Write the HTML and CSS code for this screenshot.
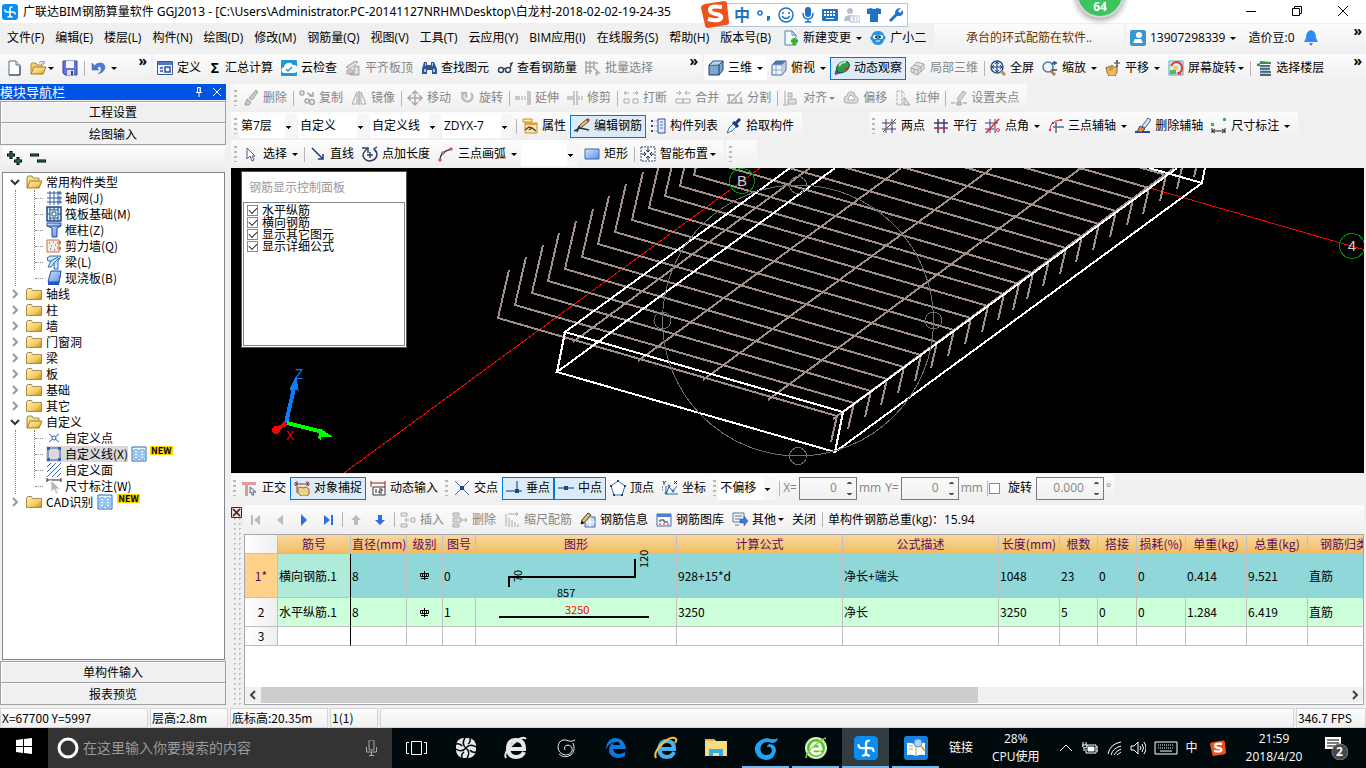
FILE: index.html
```html
<!DOCTYPE html>
<html lang="zh-CN">

<head>
    <meta charset="UTF-8">
    <meta name="viewport" content="width=device-width, initial-scale=1.0">
    <title>广联达BIM钢筋算量软件 GGJ2013</title>
    <link rel="stylesheet" href="styles.css">
</head>

<body>
    <!-- iconos -->
    <svg class="sprite" aria-hidden="true">
        <defs>
            <linearGradient id="gold" x1="0" y1="0" x2="1" y2="1"><stop offset="0" stop-color="#fdf0ba"/><stop offset=".6" stop-color="#f2cf68"/><stop offset="1" stop-color="#c98612"/></linearGradient>
            <linearGradient id="blue" x1="0" y1="0" x2="1" y2="1"><stop offset="0" stop-color="#d4e4ff"/><stop offset="1" stop-color="#5c8fe8"/></linearGradient>
        </defs>
        <symbol id="logo" viewBox="0 0 16 16"><rect width="16" height="16" rx="3" fill="#0a8df0"/><path d="M10 3q-2 0-2 2v6q0 2-2 2M3 6q0 2 2 2h6q2 0 2 2M10 13q-2 0-2-2" fill="none" stroke="#fff" stroke-width="1.500" stroke-linecap="round"/></symbol>
        <symbol id="page" viewBox="0 0 16 16"><path d="M3 1h7l4 4v10H3z" fill="#fff" stroke="#57718c"/><path d="M10 1v4h4" fill="#dbe9f8" stroke="#57718c"/><path d="M3 15h11V6" stroke="#2f4964" fill="none"/></symbol>
        <symbol id="open" viewBox="0 0 16 16"><path d="M1 14V4l1-1h4l1 2h5v3" fill="#f5d071" stroke="#b98a2a"/><path d="M1 14l3-7h12l-3 7z" fill="url(#gold)" stroke="#a87818"/><path d="M9 3q2-3 5-1M14 1v3h-3" fill="none" stroke="#7693b8"/></symbol>
        <symbol id="opened" viewBox="0 0 16 16"><path d="M1 14V3l1-1h4l1 2h6v3" fill="#f8dd92" stroke="#a88a4a"/><path d="M1 14l3-7h12l-3 7z" fill="url(#gold)" stroke="#a87818"/></symbol>
        <symbol id="save" viewBox="0 0 16 16"><path d="M1 1h14v14H3l-2-2z" fill="#6373d4" stroke="#3a46a3"/><path d="M4 1h8v7H4z" fill="#f3f5ff"/><path d="M5 10h7v5H5z" fill="#d9dcf0"/><path d="M9 11h2v4H9z" fill="#384190"/></symbol>
        <symbol id="undo" viewBox="0 0 16 16"><path d="M2 3v7h7L7 8q4-3 4 0 1 3-3 6 7-2 7-7-1-6-9-3L5 6z" fill="#4f79d2" stroke="#3a61b3" stroke-width=".5"/></symbol>
        <symbol id="form" viewBox="0 0 16 16"><path d="M.5 1.500h15v13H.5z" fill="#edf3ff" stroke="#39599a"/><path d="M1 2h14v3H1z" fill="#4a78d0"/><path d="M3 8h3M3 11h3M8 7h5v5H8z" fill="none" stroke="#35508c" stroke-width="1.500"/></symbol>
        <symbol id="cloud" viewBox="0 0 16 16"><rect width="16" height="16" rx="1" fill="#2196d8"/><path d="M4 13a3 3 0 0 1-1-6 5 5 0 0 1 9-2 4 4 0 0 1 1 8z" fill="#fff"/><path d="M5 9l2 2 4-4" fill="none" stroke="#2196d8" stroke-width="1.500"/></symbol>
        <symbol id="slab" viewBox="0 0 16 16"><path d="M1 7l9-6 3 1-8 7zM2 10h6v4H2zM9 6h5v9H5v-2h4z" fill="#ccc" stroke="#a9a9a9"/><path d="M4 8l7-5M10 9h3M10 12h3" stroke="#fff"/></symbol>
        <symbol id="binoc" viewBox="0 0 16 16"><path d="M3 2h3v3h4V2h3l3 7v5h-5v-4H6v4H1V9z" fill="#31568f"/><path d="M3 9h2v3H3zM12 9h2v3h-2zM4 3h1v3H4zM11 3h1v3h-1z" fill="#a9c8ee"/></symbol>
        <symbol id="glasses" viewBox="0 0 16 16"><g fill="#fff" stroke="#36465a" stroke-width="1.500"><circle cx="4" cy="10" r="2.500"/><circle cx="11" cy="10" r="2.500"/><path d="M6 9q1-1 2.500 0M13 8l2-5-2 1" fill="none"/></g></symbol>
        <symbol id="batch" viewBox="0 0 16 16"><path d="M1 1v13M5 1v13M9 1v5M0 3h13M0 7h10M0 11h7M8 7l6 6h-3l1 3" fill="none" stroke="#aaa" stroke-width="1.500"/></symbol>
        <symbol id="cube" viewBox="0 0 16 16"><path d="M1 5l4-4h10v9l-4 5H1z" fill="#7fa6d3" stroke="#1c3d66"/><path d="M1 5h10v10M11 5l4-4" fill="none" stroke="#1c3d66"/><path d="M2 5l3.500-3.500H14L11 4.500z" fill="#b9d3ee"/></symbol>
        <symbol id="cubetop" viewBox="0 0 16 16"><path d="M1 5l4-4h10v9l-4 5H1z" fill="#eef5fd" stroke="#3d638f"/><path d="M1 5l4-4h10l-4 4z" fill="#4a77b0"/><path d="M11 5v10M1 5h10M5 5v10M1 10h10M13 3v9" fill="none" stroke="#87a9cf"/></symbol>
        <symbol id="orbit" viewBox="0 0 16 16"><path d="M1 15q-1-5 4-9l3 7q-4 1-7 2z" fill="#5b4b96"/><ellipse cx="9" cy="7" rx="7" ry="5" transform="rotate(-35 9 7)" fill="#2f9b4d" stroke="#175b2b"/><path d="M5 6q2-4 7-4" stroke="#b5efbb" stroke-width="2" fill="none"/><path d="M10 9l5-1" stroke="#d32020"/></symbol>
        <symbol id="cubepart" viewBox="0 0 16 16"><path d="M1 8l6-6 7 2v5l-7 6-6-3zM1 8l7 2v5M8 10l6-6M4 5l7 2v5M4 9v4" fill="#e2e2e2" stroke="#a6a6a6"/></symbol>
        <symbol id="fit" viewBox="0 0 16 16"><circle cx="7" cy="7" r="6" fill="#e6effb" stroke="#2d507f" stroke-width="1.500"/><path d="M7 2v10M2 7h10M5 4l2-2 2 2M5 10l2 2 2-2M4 5L2 7l2 2M10 5l2 2-2 2" fill="none" stroke="#1d3f78"/><path d="M11 11l4 4" stroke="#b98d55" stroke-width="3"/></symbol>
        <symbol id="zoom" viewBox="0 0 16 16"><circle cx="6" cy="7" r="5" fill="#edf4fd" stroke="#5e7899" stroke-width="1.500"/><path d="M9 11l4 4" stroke="#bb8146" stroke-width="3"/><path d="M10 3h5M12.500 1v4M10 10h5" stroke="#26487c" stroke-width="1.500"/></symbol>
        <symbol id="pan" viewBox="0 0 16 16"><path d="M1 7l2 1 1-2 2 1 1-2 2 2 3 0v5l-2 4H4L2 12z" fill="#e9bb63" stroke="#9a6b23"/><path d="M5 8v3M7 7v3" stroke="#9a6b23"/><path d="M12 0v7M9 3h6M11 1h2M11 6h2" stroke="#25364d"/></symbol>
        <symbol id="rot" viewBox="0 0 16 16"><path d="M1 1h14v14H1z" fill="#d9f0f7" stroke="#4fa4bd"/><path d="M3 6q2-4 6-4 5 1 5 6 0 4-4 6" fill="none" stroke="#e23b2f" stroke-width="2"/><path d="M8 13l5-2v4z" fill="#e23b2f"/><path d="M5 6h5v4H5z" fill="#ecd064"/><path d="M2 10h6v4H2z" fill="#61b64c"/></symbol>
        <symbol id="floors" viewBox="0 0 16 16"><path d="M1 3h3V1l11 1v2H4z" fill="#3d8e46"/><path d="M4 6h10M4 9h10M4 12h11M4 15h11" stroke="#1f3446" stroke-width="1.500"/><path d="M4 7h9M4 10h9M4 13h9" stroke="#61a5c4"/><path d="M1 4h3v2H1z" fill="#3d8e46"/></symbol>
        <symbol id="brush" viewBox="0 0 16 16"><path d="M1 14h6l-3-3z" fill="#b5b5b5"/><path d="M6 8l7-8 2 2-6 8zM4 9l4 3-2 3H2z" fill="#c9c9c9" stroke="#a0a0a0"/></symbol>
        <symbol id="copy" viewBox="0 0 16 16"><g fill="#eee" stroke="#a9a9a9" stroke-width="1.500"><circle cx="3" cy="3" r="2"/><circle cx="8" cy="11" r="2"/><circle cx="13" cy="12" r="2.500"/><path d="M8 3l6 3M14 2v4h-4" fill="none"/></g></symbol>
        <symbol id="mirror" viewBox="0 0 16 16"><path d="M6 2v12H1zM10 2v12h5z" fill="#f4f4f4" stroke="#aaa"/><path d="M8 1v14" stroke="#888"/></symbol>
        <symbol id="move" viewBox="0 0 16 16"><path d="M8 2v12M2 8h12M5 4l3-3 3 3M5 12l3 3 3-3M4 5L1 8l3 3M12 5l3 3-3 3" fill="none" stroke="#aaa" stroke-width="1.500"/></symbol>
        <symbol id="spin" viewBox="0 0 16 16"><path d="M4 4a5 5 0 1 0 8-1M2 3h5v5" fill="none" stroke="#bbb" stroke-width="2.500"/></symbol>
        <symbol id="extend" viewBox="0 0 16 16"><path d="M0 7h5M0 9h5M13 1v14M15 1v14" stroke="#999"/><path d="M6 7h6M6 9h6" stroke="#aaa" stroke-dasharray="2 1"/></symbol>
        <symbol id="trim" viewBox="0 0 16 16"><path d="M0 7h6M0 9h6M7 1v14M10 1v14" stroke="#999"/><path d="M11 7h5M11 9h5" stroke="#aaa" stroke-dasharray="2 1"/></symbol>
        <symbol id="break" viewBox="0 0 16 16"><path d="M1 3h5M10 3h5M3 1L1 3l2 2M13 1l2 2-2 2M1 9h5v4H1zM10 9h5v4h-5z" fill="none" stroke="#aaa"/></symbol>
        <symbol id="merge" viewBox="0 0 16 16"><path d="M1 3h5M10 3h5M4 1l2 2-2 2M12 1l-2 2 2 2M1 9h7v4H1zM8 9h7v4H8z" fill="none" stroke="#aaa"/></symbol>
        <symbol id="split" viewBox="0 0 16 16"><path d="M0 5h8M0 13h16M2 5v8M9 13V9M14 7v6M4 12L14 2" stroke="#aaa" stroke-width="1.500"/></symbol>
        <symbol id="align" viewBox="0 0 16 16"><path d="M2 1v14M0 15h5M5 3h4v4H5zM5 9h8v5H5z" fill="#ddd" stroke="#aaa"/></symbol>
        <symbol id="offset" viewBox="0 0 16 16"><path d="M1 10q0-4 3-4 1-5 5-4 3 0 3 4 4 1 3 5-1 3-4 2H4q-3 0-3-3z" fill="#ddd" stroke="#aaa"/><path d="M5 9q1-3 3-4 3 1 4 5H5z" fill="#fff" stroke="#aaa"/></symbol>
        <symbol id="stretch" viewBox="0 0 16 16"><path d="M2 1h5v14H2zM7 1l3 4" fill="none" stroke="#aaa" stroke-dasharray="3 1"/><path d="M9 7v8h6z" fill="#ddd" stroke="#aaa"/></symbol>
        <symbol id="gripset" viewBox="0 0 16 16"><path d="M6 9l6-8 3 2-6 8z" fill="#d5d5d5" stroke="#aaa"/><path d="M0 13h4M6 12h4v3H6zM12 13h4" stroke="#999" fill="#ccc"/></symbol>
        <symbol id="props" viewBox="0 0 16 16"><path d="M1 1h9v3H1zM3 5h12v10H3z" fill="#ffe7ad" stroke="#d48c1d"/><path d="M3 5h12v2H3z" fill="#ef9a2f"/><path d="M3 12l4-3 3 1 4 3M7 12l3-2" fill="none" stroke="#3b4958" stroke-width="1.500"/></symbol>
        <symbol id="editbar" viewBox="0 0 16 16"><path d="M0 13l6-3 9 2M3 14l2-6" stroke="#27323d" fill="none" stroke-width="1.500"/><path d="M5 10l1-3 7-6 2 2-7 6z" fill="#edc57a" stroke="#624429"/><path d="M12 2l2-2 2 2-2 2z" fill="#d2362f"/></symbol>
        <symbol id="list" viewBox="0 0 16 16"><path d="M8 1h7v14H8z" fill="#e3edff" stroke="#2e4d8f"/><path d="M10 4h3M10 7h3M10 10h3" stroke="#5673b1"/><path d="M1 2h2v2H1zM1 7h2v2H1zM1 12h2v2H1z" fill="#344c7c"/><path d="M4 3h3M4 8h3M4 13h3" stroke="#7889a6" stroke-dasharray="1 1"/></symbol>
        <symbol id="picker" viewBox="0 0 16 16"><path d="M1 15l2-5 6-6 3 3-6 6z" fill="#e3f0fd" stroke="#3b75a8"/><path d="M7 4l5 5M10 5l4-4" stroke="#173d82" stroke-width="3"/></symbol>
        <symbol id="ax2" viewBox="0 0 16 16"><path d="M5 1v14M11 1v14M1 5h14M1 11h14" stroke="#35407c"/><path d="M2 14L15 1" stroke="#9a2b3a"/><path d="M4 10h2v2H4zM10 4h2v2h-2z" fill="#2ba03a"/></symbol>
        <symbol id="axpar" viewBox="0 0 16 16"><path d="M5 1v14M11 1v14M1 5h14" stroke="#35407c" stroke-width="1.500"/><path d="M1 10h14" stroke="#a32d38" stroke-width="1.500"/></symbol>
        <symbol id="axang" viewBox="0 0 16 16"><path d="M5 1v14M10 1v14M0 5h13M0 11h9" stroke="#35407c"/><path d="M1 15L14 1" stroke="#e0272f" stroke-width="1.500"/><circle cx="13" cy="12" r="1.500" fill="#fff" stroke="#e0272f"/></symbol>
        <symbol id="axarc" viewBox="0 0 16 16"><path d="M8 4v11M5 9h11" stroke="#5c668c" stroke-width="1.500"/><path d="M2 12q0-9 10-10" fill="none" stroke="#e0272f"/><path d="M1 11h2v2H1zM4 4h2v2H4zM12 1h2v2h-2z" fill="#e0272f"/></symbol>
        <symbol id="axdel" viewBox="0 0 16 16"><path d="M0 14h15" stroke="#28459b" stroke-width="2"/><path d="M7 8l6-8 3 2-6 8z" fill="#d7e1ef" stroke="#44648b"/><path d="M5 8l5 3-3 3H2z" fill="#e58c45" stroke="#3d445d"/></symbol>
        <symbol id="dims" viewBox="0 0 16 16"><path d="M1 10v5M14 10v5M1 13h13M4 11l-3 2 3 2M11 11l3 2-3 2" fill="none" stroke="#222"/><path d="M0 5h3v3H0zM12 0h3v3h-3z" fill="#39b54a"/></symbol>
        <symbol id="arrow" viewBox="0 0 16 16"><path d="M4 2v11l3-3 2 5 2-1-2-4h3z" fill="#fff" stroke="#4a5d79"/></symbol>
        <symbol id="seg" viewBox="0 0 16 16"><path d="M2 2l11 11M13 8v5H8" fill="none" stroke="#203d78" stroke-width="1.500"/></symbol>
        <symbol id="ptlen" viewBox="0 0 16 16"><path d="M5 3q-4 3-4 7 2 5 7 5 6-1 7-6 0-4-3-6M0 2h6v5M15 1l-3 2 2 3M5 9h6M8 6v6" fill="none" stroke="#2c4268" stroke-width="1.500"/></symbol>
        <symbol id="arc3" viewBox="0 0 16 16"><path d="M2 14q0-8 11-11" fill="none" stroke="#26477c" stroke-width="1.500"/><path d="M1 13h2v2H1zM4 6h2v2H4zM12 2h2v2h-2z" fill="#fff" stroke="#d02f26"/></symbol>
        <symbol id="rect" viewBox="0 0 16 16"><path d="M1 3h14v10H1z" fill="url(#blue)" stroke="#4166ae"/></symbol>
        <symbol id="smart" viewBox="0 0 16 16"><path d="M1 1h14v14H1z" fill="#fff" stroke="#26426d" stroke-dasharray="2 1"/><path d="M8 2v4M8 10v4M2 8h4M10 8h4M6 4l2 2 2-2M6 12l2-2 2 2M4 6l2 2-2 2M12 6l-2 2 2 2" fill="none" stroke="#1b2f50"/></symbol>
        <symbol id="ortho" viewBox="0 0 16 16"><path d="M0 2h14v3H6v11H3V5H0z" fill="#dd9ba0"/><path d="M8 7l6 5h-3l1 3h-2l-1-3-1 1z" fill="#dce5ec" stroke="#556c83"/></symbol>
        <symbol id="snap" viewBox="0 0 16 16"><path d="M3 1v12M13 1v5M0 4h16M1 2l2 2-2 2M15 2l-2 2 2 2" fill="none" stroke="#8b3630"/><path d="M4 8l3-1 2 1 3-1 3 2v5l-2 2H7l-3-3z" fill="#ead286" stroke="#98712c"/></symbol>
        <symbol id="dynin" viewBox="0 0 16 16"><path d="M1 1v6M15 1v6M1 3h14" stroke="#96201e"/><path d="M3 7h12v8H3z" fill="#fff" stroke="#333"/><path d="M6 9v4M9 9h3v2H9v2h3" fill="none" stroke="#222"/></symbol>
        <symbol id="cross" viewBox="0 0 16 16"><path d="M1 1l14 14M15 1L1 15" stroke="#4477b0"/><path d="M6 6h4v4H6z" fill="#154984"/></symbol>
        <symbol id="perp" viewBox="0 0 16 16"><path d="M0 11h16M11 1v10" stroke="#4477b0" stroke-width="1.500"/><path d="M9 9h4v4H9z" fill="#154984"/></symbol>
        <symbol id="mid" viewBox="0 0 16 16"><path d="M0 8h16" stroke="#4477b0" stroke-width="1.500"/><path d="M6 6h4v4H6z" fill="#154984"/></symbol>
        <symbol id="penta" viewBox="0 0 16 16"><path d="M8 1l7 5-3 9H4L1 6z" fill="#fff" stroke="#3d6da3"/><path d="M7 0h2v2H7zM0 5h2v2H0zM14 5h2v2h-2zM3 14h2v2H3zM11 14h2v2h-2z" fill="#164984"/></symbol>
        <symbol id="coord" viewBox="0 0 16 16"><path d="M4 6v8h12M4 14l3-7 4 4 4-5" fill="none" stroke="#2b66a9"/><g fill="#fff" stroke="#2b4c77"><circle cx="7" cy="6" r="1"/><circle cx="11" cy="11" r="1"/><circle cx="4" cy="13" r="1"/></g><path d="M12 1l3 3M15 1l-3 3M1 1l1 2 2-2M2 3v2M0 7h1M0 10h1" fill="none" stroke="#333"/></symbol>
        <symbol id="rowins" viewBox="0 0 16 16"><path d="M1 1h6v3H1zM1 12h6v3H1zM5 8h4M7 6L5 8l2 2M11 6h4v4h-4z" fill="#eee" stroke="#aaa"/></symbol>
        <symbol id="rowdel" viewBox="0 0 16 16"><path d="M1 1h6v3H1zM1 12h6v3H1zM1 6h8v4H1zM9 8h6M13 6l2 2-2 2" fill="#ddd" stroke="#aaa"/></symbol>
        <symbol id="scaleb" viewBox="0 0 16 16"><path d="M2 2v12M4 2h10M12 0l2 2-2 2M5 6v9M8 8v7M11 10v5M14 12v3" fill="none" stroke="#aaa"/></symbol>
        <symbol id="info" viewBox="0 0 16 16"><path d="M5 5h10v10H5z" fill="#c9dcfb" stroke="#4267a9"/><path d="M10 5v10M5 10h10" stroke="#fff"/><path d="M1 12l1-4 6-7 3 2-7 8z" fill="#e6bb67" stroke="#3c3d44"/><path d="M1 12l1-3 2 2z"/></symbol>
        <symbol id="lib" viewBox="0 0 16 16"><path d="M1 2h14v12H1z" fill="#f1f6ff" stroke="#416dab"/><path d="M1 2h14v3H1z" fill="#4d80c4"/><path d="M4 10V8h4v2h4" fill="none" stroke="#333"/><path d="M3 12h2M7 12h2M11 12h2" stroke="#d22"/></symbol>
        <symbol id="other" viewBox="0 0 16 16"><path d="M1 1h11v9H1z" fill="#edf2f8" stroke="#657c98"/><path d="M3 4h7M3 7h5M3 13h4" stroke="#657c98"/><path d="M8 7h4V4l4 5-4 5v-3H8z" fill="#4579d6" stroke="#24499e" stroke-width=".5"/></symbol>
        <symbol id="first" viewBox="0 0 16 16"><path d="M3 3h2v10H3zM12 3v10L6 8z" fill="#bbb"/></symbol>
        <symbol id="prev" viewBox="0 0 16 16"><path d="M11 3v10L5 8z" fill="#bbb"/></symbol>
        <symbol id="next" viewBox="0 0 16 16"><path d="M5 2v12l6-6z" fill="#2c6ee6"/></symbol>
        <symbol id="last" viewBox="0 0 16 16"><path d="M11 3h2v10h-2zM4 3v10l6-5z" fill="#2c6ee6"/></symbol>
        <symbol id="up" viewBox="0 0 16 16"><path d="M8 3l5 5h-3v5H6V8H3z" fill="#bbb"/></symbol>
        <symbol id="down" viewBox="0 0 16 16"><path d="M8 13l5-5h-3V3H6v5H3z" fill="#2c6ee6"/></symbol>
        <symbol id="folder" viewBox="0 0 16 16"><path d="M.5 13.500v-10l1-1h4l1 2h9v9z" fill="url(#gold)" stroke="#a88a4a"/></symbol>
        <symbol id="boxes" viewBox="0 0 16 16"><path d="M1 1h14v14H1z" fill="#e8f4ff" stroke="#2a6bb0"/><path d="M3 4h4v9H3zM9 4h4v9H9z" fill="#fff" stroke="#4191e0"/><path d="M4 7h2M4 10h2M10 7h2M10 10h2" stroke="#4191e0"/></symbol>
        <symbol id="axes" viewBox="0 0 16 16"><path d="M4 1v14M8 1v14M12 1v14M1 3h13M1 8h13M1 12h13" stroke="#2e56a8"/><path d="M13 2h2v2h-2zM13 7h2v2h-2zM13 11h2v2h-2z" fill="#fff" stroke="#2e56a8"/></symbol>
        <symbol id="raft" viewBox="0 0 16 16"><path d="M1 1h14v14H1z" fill="#cfe9f5" stroke="#1c4a80" stroke-width="1.500"/><path d="M4 4h8v8H4zM4 1v3M8 1v3M12 1v3M4 12v3M8 12v3M12 12v3M1 8h3M12 8h3M6 6h4v4H6z" fill="#fff" stroke="#1c4a80"/></symbol>
        <symbol id="column" viewBox="0 0 16 16"><path d="M1 1h14v3l-4 2v9H6V6L1 4z" fill="url(#blue)" stroke="#1e4aa8"/><path d="M1 4h14" stroke="#1e4aa8"/></symbol>
        <symbol id="wall" viewBox="0 0 16 16"><path d="M1 2h12v12H1z" fill="#f3ebe6" stroke="#c96f4a"/><path d="M3 5h1M7 4h1M5 8h1M9 7h1M4 11h1M8 12h1M11 10h1M11 5h1" stroke="#555"/><path d="M14 3v3M14 9v3" stroke="#dd7325" stroke-width="2"/></symbol>
        <symbol id="beam" viewBox="0 0 16 16"><path d="M1 4l3-2h11l-3 5v8H8V9l-3 4H2l3-6H2z" fill="#cfe6f8" stroke="#2b69b3"/><path d="M5 7l7-4M8 9l5-5" stroke="#2b69b3"/></symbol>
        <symbol id="plate" viewBox="0 0 16 16"><path d="M5 1h10l-2 11H2z" fill="url(#blue)" stroke="#1e4aa8"/><path d="M2 12h11l2-11v3l-2 11H2z" fill="#2457b8"/></symbol>
        <symbol id="cpoint" viewBox="0 0 16 16"><path d="M3 4l10 8M13 4L3 12" stroke="#2e5cb0"/><circle cx="8" cy="8" r="2" fill="#fff" stroke="#2e5cb0"/></symbol>
        <symbol id="cline" viewBox="0 0 16 16"><path d="M2 2h12v12H2z" fill="none" stroke="#3d5c99"/><path d="M1 1h3v3H1zM12 1h3v3h-3zM1 12h3v3H1zM12 12h3v3h-3z" fill="#2d66c8"/></symbol>
        <symbol id="cface" viewBox="0 0 16 16"><path d="M1 5l4-4M1 10l9-9M1 15L15 1M6 15l9-9M11 15l4-4" stroke="#2f65c2"/></symbol>
        <symbol id="cdim" viewBox="0 0 16 16"><path d="M1 0v4M15 0v4M1 2h14" stroke="#222"/><path d="M5 2v12l3-3 2 5 2-1-2-4h4z" fill="#b8b8b8" stroke="#eee"/></symbol>
        <symbol id="sogou" viewBox="0 0 28 28"><path d="M4 4l19-3q3 0 3 3l2 18q0 3-3 3L7 28q-3 0-3-3L0 8q0-3 4-4z" fill="#f0521c"/><path d="M21 7q-12-2-12 3 0 3 6 4 6 1 5 4-2 4-13 1" fill="none" stroke="#fff" stroke-width="4"/></symbol>
        <symbol id="eglobe" viewBox="0 0 24 24"><path d="M5 13h15q0-9-8-9t-8 9q1 8 8 8 6 0 8-5" fill="none" stroke="currentColor" stroke-width="4"/><path d="M2 22Q-1 17 9 8T22 3" fill="none" stroke="currentColor" stroke-width="2"/></symbol>
        <symbol id="swirl" viewBox="0 0 24 24"><path d="M21 4q-3 2-6 1-7-3-10 2-3 7 3 11 7 3 10-3 1-5-4-6-5 1-3 5M19 7q3 7-2 12-7 4-12-1" fill="none" stroke="currentColor"/></symbol>
    </svg>

    <header class="titlebar">
        <svg class="ic"><use href="#logo"/></svg>
        <h1>广联达BIM钢筋算量软件 GGJ2013 - [C:\Users\Administrator.PC-20141127NRHM\Desktop\白龙村-2018-02-02-19-24-35</h1>
        <div class="win">
            <button aria-label="最小化"><svg viewBox="0 0 10 10"><path d="M0 5.500h10"/></svg></button>
            <button aria-label="还原"><svg viewBox="0 0 10 10"><path d="M.5 2.500h7v7h-7zM2.500 2V.5h7v7H8"/></svg></button>
            <button aria-label="关闭"><svg viewBox="0 0 10 10"><path d="M0 0l10 10M10 0L0 10"/></svg></button>
        </div>
        <div class="ime">
            <svg class="ime-logo"><use href="#sogou"/></svg>
            <b>中</b>
            <svg viewBox="0 0 16 16"><circle cx="4" cy="6" r="2" fill="none" stroke="#1f73c4" stroke-width="1.500"/><path d="M11 9h3v2q0 3-3 3" fill="#1f73c4"/></svg>
            <svg viewBox="0 0 16 16"><circle cx="8" cy="8" r="7" fill="none" stroke="#1f73c4" stroke-width="1.500"/><path d="M5 5v2M11 5v2M4 9q4 5 8 0" fill="none" stroke="#1f73c4" stroke-width="1.500"/></svg>
            <svg viewBox="0 0 16 16"><rect x="5" y="0" width="6" height="10" rx="3" fill="#1f73c4"/><path d="M3 6q0 6 5 6t5-6M8 12v3M5 15h6" fill="none" stroke="#1f73c4" stroke-width="1.500"/></svg>
            <svg viewBox="0 0 16 16"><rect y="2" width="16" height="12" rx="1" fill="#1f73c4"/><path d="M2 5h12M2 8h12" stroke="#fff" stroke-width="2" stroke-dasharray="2 1"/><path d="M4 11.500h8" stroke="#fff"/></svg>
            <svg viewBox="0 0 16 16"><circle cx="6" cy="4" r="3" fill="#b3bfd0"/><path d="M0 14q0-6 6-6t6 6z" fill="#b3bfd0"/><path d="M6 9h10v6H6z" fill="#fff" stroke="#b3bfd0"/><path d="M8 11h3M8 13h3M12 11h2M12 13h2" stroke="#b3bfd0"/></svg>
            <svg viewBox="0 0 16 16"><path d="M1 2l4-1q3 2 6 0l4 1v5h-3v8H4V7H1z" fill="#1f73c4"/></svg>
            <svg viewBox="0 0 16 16"><path d="M2 14l7-7" stroke="#1f73c4" stroke-width="3"/><path d="M13 1l-3 3 2 2 3-3q1 6-4 6-4 0-4-4 1-4 6-4" fill="#1f73c4"/></svg>
        </div>
        <div class="ball">64</div>
    </header>

    <nav class="menubar">
        <div class="menus">
            <button>文件(F)</button><button>编辑(E)</button><button>楼层(L)</button><button>构件(N)</button><button>绘图(D)</button><button>修改(M)</button><button>钢筋量(Q)</button><button>视图(V)</button><button>工具(T)</button><button>云应用(Y)</button><button>BIM应用(I)</button><button>在线服务(S)</button><button>帮助(H)</button><button>版本号(B)</button>
        </div>
        <button class="tool"><svg class="ic" viewBox="0 0 16 16"><path d="M2 1h7l4 4v10H2z" fill="#f2f9ff" stroke="#4483b8"/><path d="M9 1v4h4" fill="none" stroke="#4483b8"/><path d="M11 8v7M8 11h7" stroke="#35b01d" stroke-width="3"/></svg>新建变更<i class="caret"></i></button>
        <button class="tool"><svg class="ic" viewBox="0 0 16 16"><path d="M2 5q1-4 6-4t6 4l2 3-2 2q-1 5-6 5T2 11L0 8z" fill="#2a94dd"/><circle cx="5" cy="7" r="2" fill="#fff"/><circle cx="11" cy="7" r="2" fill="#fff"/><circle cx="6" cy="7" r="1"/><circle cx="10" cy="7" r="1"/><path d="M6 11h4" stroke="#fff"/></svg>广小二</button>
        <a class="news" href="#">承台的环式配筋在软件..</a>
        <div class="account">
            <button class="tool"><svg class="ic" viewBox="0 0 16 16"><rect width="16" height="16" rx="2" fill="#3c97cf"/><circle cx="9" cy="5" r="3" fill="#fff"/><path d="M3 13l2-4h6l2 4z" fill="#fff"/></svg>13907298339<i class="caret"></i></button>
            <span>造价豆:0</span>
            <svg class="ic" viewBox="0 0 16 16"><path d="M8 0q5 1 5 8l2 4H1l2-4q0-7 5-8zM6 13h4l-2 3z" fill="#2b8cf4"/></svg>
            <span class="more">»</span>
        </div>
    </nav>

    <div class="mainbar">
        <div class="bar bar-file">
            <button class="tool" aria-label="新建"><svg class="ic"><use href="#page"/></svg></button>
            <button class="tool" aria-label="打开"><svg class="ic"><use href="#open"/></svg><i class="caret near"></i></button>
            <button class="tool" aria-label="保存"><svg class="ic"><use href="#save"/></svg></button>
            <i class="sep"></i>
            <button class="tool" aria-label="撤销"><svg class="ic"><use href="#undo"/></svg><i class="caret"></i></button>
            <span class="more">»</span>
        </div>
        <div class="bar bar-calc">
            <button class="tool"><svg class="ic"><use href="#form"/></svg>定义</button>
            <button class="tool"><b class="sigma">Σ</b>汇总计算</button>
            <button class="tool"><svg class="ic"><use href="#cloud"/></svg>云检查</button>
            <button class="tool" disabled><svg class="ic"><use href="#slab"/></svg>平齐板顶</button>
            <button class="tool"><svg class="ic"><use href="#binoc"/></svg>查找图元</button>
            <button class="tool"><svg class="ic"><use href="#glasses"/></svg>查看钢筋量</button>
            <button class="tool" disabled><svg class="ic"><use href="#batch"/></svg>批量选择</button>
            <span class="more">»</span>
        </div>
        <div class="bar bar-view">
            <button class="tool white"><svg class="ic"><use href="#cube"/></svg>三维<i class="caret"></i></button>
            <button class="tool"><svg class="ic"><use href="#cubetop"/></svg>俯视<i class="caret"></i></button>
            <button class="tool on"><svg class="ic"><use href="#orbit"/></svg>动态观察</button>
            <button class="tool" disabled><svg class="ic"><use href="#cubepart"/></svg>局部三维</button>
            <i class="sep"></i>
            <button class="tool"><svg class="ic"><use href="#fit"/></svg>全屏</button>
            <button class="tool"><svg class="ic"><use href="#zoom"/></svg>缩放<i class="caret"></i></button>
            <button class="tool"><svg class="ic"><use href="#pan"/></svg>平移<i class="caret"></i></button>
            <button class="tool"><svg class="ic"><use href="#rot"/></svg>屏幕旋转<i class="caret near"></i></button>
            <i class="sep"></i>
            <button class="tool"><svg class="ic"><use href="#floors"/></svg>选择楼层</button>
            <span class="more">»</span>
        </div>
    </div>

    <div class="workspace">
        <aside class="navigator">
            <div class="nav-title"><span>模块导航栏</span>
                <svg viewBox="0 0 12 12"><path d="M3 6.500h6M4.500 6V1.500h3V6M7 2v4M6 7v4" fill="none" stroke="#fff"/></svg>
                <svg viewBox="0 0 12 12"><path d="M2 2l8 8M10 2l-8 8" stroke="#fff"/></svg>
            </div>
            <button class="section">工程设置</button>
            <button class="section">绘图输入</button>
            <div class="treebar">
                <svg viewBox="0 0 46 20"><g stroke="#000" stroke-width="3"><path d="M0 5h8M4 1v8M7 11h8M11 7v8M23 5h9M30 11h9"/></g><g stroke="#1a9a8a"><path d="M1 5h6M4 2v6M8 11h6M11 8v6M24 5h7M31 11h7"/></g></svg>
            </div>
            <ul class="tree">
                <li><svg class="chev" viewBox="0 0 10 10"><path d="M1 3l4 4 4-4" stroke="#333"/></svg><svg class="ic"><use href="#opened"/></svg>常用构件类型</li>
                <li class="branch">
                    <ul>
                        <li><svg class="ic"><use href="#axes"/></svg><span>轴网(J)</span></li>
                        <li><svg class="ic"><use href="#raft"/></svg><span>筏板基础(M)</span></li>
                        <li><svg class="ic"><use href="#column"/></svg><span>框柱(Z)</span></li>
                        <li><svg class="ic"><use href="#wall"/></svg><span>剪力墙(Q)</span></li>
                        <li><svg class="ic"><use href="#beam"/></svg><span>梁(L)</span></li>
                        <li><svg class="ic"><use href="#plate"/></svg><span>现浇板(B)</span></li>
                    </ul>
                </li>
                <li><svg class="chev" viewBox="0 0 10 10"><path d="M3 1l4 4-4 4"/></svg><svg class="ic"><use href="#folder"/></svg>轴线</li>
                <li><svg class="chev" viewBox="0 0 10 10"><path d="M3 1l4 4-4 4"/></svg><svg class="ic"><use href="#folder"/></svg>柱</li>
                <li><svg class="chev" viewBox="0 0 10 10"><path d="M3 1l4 4-4 4"/></svg><svg class="ic"><use href="#folder"/></svg>墙</li>
                <li><svg class="chev" viewBox="0 0 10 10"><path d="M3 1l4 4-4 4"/></svg><svg class="ic"><use href="#folder"/></svg>门窗洞</li>
                <li><svg class="chev" viewBox="0 0 10 10"><path d="M3 1l4 4-4 4"/></svg><svg class="ic"><use href="#folder"/></svg>梁</li>
                <li><svg class="chev" viewBox="0 0 10 10"><path d="M3 1l4 4-4 4"/></svg><svg class="ic"><use href="#folder"/></svg>板</li>
                <li><svg class="chev" viewBox="0 0 10 10"><path d="M3 1l4 4-4 4"/></svg><svg class="ic"><use href="#folder"/></svg>基础</li>
                <li><svg class="chev" viewBox="0 0 10 10"><path d="M3 1l4 4-4 4"/></svg><svg class="ic"><use href="#folder"/></svg>其它</li>
                <li><svg class="chev" viewBox="0 0 10 10"><path d="M1 3l4 4 4-4" stroke="#333"/></svg><svg class="ic"><use href="#opened"/></svg>自定义</li>
                <li class="branch">
                    <ul>
                        <li><svg class="ic"><use href="#cpoint"/></svg><span>自定义点</span></li>
                        <li><span class="picked"><svg class="ic"><use href="#cline"/></svg><span>自定义线(X)</span></span><svg class="ic"><use href="#boxes"/></svg><b class="new">NEW</b></li>
                        <li><svg class="ic"><use href="#cface"/></svg><span>自定义面</span></li>
                        <li><svg class="ic"><use href="#cdim"/></svg><span>尺寸标注(W)</span></li>
                    </ul>
                </li>
                <li><svg class="chev" viewBox="0 0 10 10"><path d="M3 1l4 4-4 4"/></svg><svg class="ic"><use href="#folder"/></svg>CAD识别<svg class="ic"><use href="#boxes"/></svg><b class="new">NEW</b></li>
            </ul>
            <button class="section">单构件输入</button>
            <button class="section">报表预览</button>
        </aside>

        <main class="content">
            <div class="row">
                <div class="bar">
                    <i class="grip"></i>
                    <button class="tool" disabled><svg class="ic"><use href="#brush"/></svg>删除</button>
                    <i class="sep"></i>
                    <button class="tool" disabled><svg class="ic"><use href="#copy"/></svg>复制</button>
                    <button class="tool" disabled><svg class="ic"><use href="#mirror"/></svg>镜像</button>
                    <i class="sep"></i>
                    <button class="tool" disabled><svg class="ic"><use href="#move"/></svg>移动</button>
                    <button class="tool" disabled><svg class="ic"><use href="#spin"/></svg>旋转</button>
                    <i class="sep"></i>
                    <button class="tool" disabled><svg class="ic"><use href="#extend"/></svg>延伸</button>
                    <button class="tool" disabled><svg class="ic"><use href="#trim"/></svg>修剪</button>
                    <i class="sep"></i>
                    <button class="tool" disabled><svg class="ic"><use href="#break"/></svg>打断</button>
                    <button class="tool" disabled><svg class="ic"><use href="#merge"/></svg>合并</button>
                    <button class="tool" disabled><svg class="ic"><use href="#split"/></svg>分割</button>
                    <i class="sep"></i>
                    <button class="tool" disabled><svg class="ic"><use href="#align"/></svg>对齐<i class="caret near"></i></button>
                    <button class="tool" disabled><svg class="ic"><use href="#offset"/></svg>偏移</button>
                    <button class="tool" disabled><svg class="ic"><use href="#stretch"/></svg>拉伸</button>
                    <i class="sep"></i>
                    <button class="tool" disabled><svg class="ic"><use href="#gripset"/></svg>设置夹点</button>
                </div>
            </div>
            <div class="row">
                <div class="bar">
                    <i class="grip"></i>
                    <select class="short" aria-label="楼层"><option>第7层</option></select>
                    <select aria-label="构件类别"><option>自定义</option></select>
                    <select aria-label="构件类型"><option>自定义线</option></select>
                    <select aria-label="构件名称"><option>ZDYX-7</option></select>
                    <i class="sep"></i>
                    <button class="tool"><svg class="ic"><use href="#props"/></svg>属性</button>
                    <button class="tool on"><svg class="ic"><use href="#editbar"/></svg>编辑钢筋</button>
                    <button class="tool"><svg class="ic"><use href="#list"/></svg>构件列表</button>
                    <button class="tool"><svg class="ic"><use href="#picker"/></svg>拾取构件</button>
                </div>
                <div class="bar bar-axis">
                    <i class="grip"></i>
                    <button class="tool"><svg class="ic"><use href="#ax2"/></svg>两点</button>
                    <button class="tool"><svg class="ic"><use href="#axpar"/></svg>平行</button>
                    <button class="tool"><svg class="ic"><use href="#axang"/></svg>点角<i class="caret"></i></button>
                    <button class="tool"><svg class="ic"><use href="#axarc"/></svg>三点辅轴<i class="caret"></i></button>
                    <button class="tool"><svg class="ic"><use href="#axdel"/></svg>删除辅轴</button>
                    <button class="tool"><svg class="ic"><use href="#dims"/></svg>尺寸标注<i class="caret"></i></button>
                </div>
            </div>
            <div class="row">
                <div class="bar">
                    <i class="grip"></i>
                    <button class="tool"><svg class="ic"><use href="#arrow"/></svg>选择<i class="caret"></i></button>
                    <i class="sep"></i>
                    <button class="tool"><svg class="ic"><use href="#seg"/></svg>直线</button>
                    <button class="tool"><svg class="ic"><use href="#ptlen"/></svg>点加长度</button>
                    <button class="tool"><svg class="ic"><use href="#arc3"/></svg>三点画弧<i class="caret"></i></button>
                    <select class="short" aria-label="画弧方式"><option></option></select>
                    <button class="tool"><svg class="ic"><use href="#rect"/></svg>矩形</button>
                    <i class="sep"></i>
                    <button class="tool"><svg class="ic"><use href="#smart"/></svg>智能布置<i class="caret near"></i></button>
                </div>
                <div class="bar bar-empty"><i class="grip"></i></div>
            </div>

            <div class="view">
                <svg class="scene" viewBox="231 168 1133 305" preserveAspectRatio="xMinYMin slice" shape-rendering="crispEdges">
                    <defs><path id="stirrup" d="M11-48L0 0l339 98-6 26"/></defs>
                    <path d="M344 473L760 168M1150 188l215 62" stroke="#f00"/>
                    <g fill="none" stroke="#9f8f88" stroke-width="2">
                        <use href="#stirrup" x="498" y="318"/><use href="#stirrup" x="515" y="305"/><use href="#stirrup" x="532" y="293"/><use href="#stirrup" x="548" y="281"/>
                        <use href="#stirrup" x="565" y="269"/><use href="#stirrup" x="582" y="257"/><use href="#stirrup" x="598" y="244"/><use href="#stirrup" x="615" y="232"/>
                        <use href="#stirrup" x="632" y="220"/><use href="#stirrup" x="649" y="208"/><use href="#stirrup" x="665" y="196"/><use href="#stirrup" x="680" y="186"/>
                        <use href="#stirrup" x="694" y="175"/><use href="#stirrup" x="710" y="162"/><use href="#stirrup" x="727" y="150"/><use href="#stirrup" x="743" y="138"/>
                        <use href="#stirrup" x="760" y="126"/><use href="#stirrup" x="777" y="113"/><use href="#stirrup" x="794" y="101"/><use href="#stirrup" x="810" y="90"/>
                        <use href="#stirrup" x="827" y="77"/><use href="#stirrup" x="844" y="65"/><use href="#stirrup" x="861" y="53"/>
                        <path d="M573 342l237-174M638 361l263-193M703 380l289-212M768 400l313-232M833 419l341-251"/>
                    </g>
                    <g fill="none" stroke="#fff" stroke-width="2">
                        <path d="M790 168L565 332l278 80 334-244M835 168L557 372l278 80 367-269 3-15M565 332l-8 40M843 412l-8 40M1149 168l53 15"/>
                    </g>
                    <g fill="none" stroke="#6f6f6f">
                        <circle cx="798" cy="320.500" r="135.500"/><circle cx="798" cy="185" r="8.500"/><circle cx="798" cy="456" r="8.500"/><circle cx="662.500" cy="320.500" r="8.500"/><circle cx="933.500" cy="320.500" r="8.500"/>
                    </g>
                    <g fill="none" stroke="#008a00"><circle cx="742" cy="181" r="12.500"/><circle cx="1352" cy="246" r="12.500"/></g>
                    <text x="742" y="186" class="axis">B</text><text x="1352" y="251" class="axis">4</text>
                    <path d="M286 423l8-35" stroke="#0a7cff" stroke-width="4"/><path d="M296 377l-6 12 8 1z" fill="#0a7cff" stroke="#0a7cff"/>
                    <path d="M287 423l36 9" stroke="#0f0" stroke-width="4"/><path d="M333 437l-12-8-3 8 3 4v-4z" fill="#0f0"/>
                    <path d="M286 423l-8 6" stroke="#f00" stroke-width="4"/><circle cx="276" cy="430" r="4" fill="#f00"/>
                    <text x="299" y="379" class="axis z">Z</text><text x="290" y="440" class="axis x">X</text>
                </svg>
                <form class="panel">
                    <h2>钢筋显示控制面板</h2>
                    <div class="checks">
                        <label><input type="checkbox" checked>水平纵筋</label>
                        <label><input type="checkbox" checked>横向钢筋</label>
                        <label><input type="checkbox" checked>显示其它图元</label>
                        <label><input type="checkbox" checked>显示详细公式</label>
                    </div>
                </form>
            </div>

            <div class="row row-snap">
                <div class="bar">
                    <i class="grip"></i>
                    <button class="tool"><svg class="ic"><use href="#ortho"/></svg>正交</button>
                    <button class="tool on"><svg class="ic"><use href="#snap"/></svg>对象捕捉</button>
                    <button class="tool"><svg class="ic"><use href="#dynin"/></svg>动态输入</button>
                </div>
                <div class="bar">
                    <i class="grip"></i>
                    <button class="tool"><svg class="ic"><use href="#cross"/></svg>交点</button>
                    <button class="tool on"><svg class="ic"><use href="#perp"/></svg>垂点</button>
                    <button class="tool on"><svg class="ic"><use href="#mid"/></svg>中点</button>
                    <button class="tool"><svg class="ic"><use href="#penta"/></svg>顶点</button>
                    <button class="tool"><svg class="ic"><use href="#coord"/></svg>坐标</button>
                </div>
                <div class="bar">
                    <i class="grip"></i>
                    <select class="short" aria-label="偏移方式"><option>不偏移</option></select>
                    <i class="sep"></i>
                    <label for="ox">X=</label><span class="spin"><input id="ox" value="0" disabled><i></i></span><span class="unit">mm</span>
                    <label for="oy">Y=</label><span class="spin"><input id="oy" value="0" disabled><i></i></span><span class="unit">mm</span>
                    <i class="sep"></i>
                    <label class="turn"><input type="checkbox">旋转</label>
                    <span class="spin wide"><input value="0.000" aria-label="旋转角度" disabled><i></i></span><span class="unit">°</span>
                </div>
            </div>

            <section class="dock">
                <div class="splitter"><svg viewBox="0 0 11 11"><path d="M.5.5h10v10H.5z" fill="#f6d5cd" stroke="#4b2424"/><path d="M2 2l7 7M9 2L2 9" stroke="#222" stroke-width="1.500"/></svg></div>
                <div class="editor">
                    <div class="bar">
                        <button class="tool" aria-label="首个" disabled><svg class="ic"><use href="#first"/></svg></button>
                        <button class="tool" aria-label="上一个" disabled><svg class="ic"><use href="#prev"/></svg></button>
                        <button class="tool" aria-label="下一个"><svg class="ic"><use href="#next"/></svg></button>
                        <button class="tool" aria-label="末个"><svg class="ic"><use href="#last"/></svg></button>
                        <i class="sep"></i>
                        <button class="tool" aria-label="上移" disabled><svg class="ic"><use href="#up"/></svg></button>
                        <button class="tool" aria-label="下移"><svg class="ic"><use href="#down"/></svg></button>
                        <i class="sep"></i>
                        <button class="tool" disabled><svg class="ic"><use href="#rowins"/></svg>插入</button>
                        <button class="tool" disabled><svg class="ic"><use href="#rowdel"/></svg>删除</button>
                        <button class="tool" disabled><svg class="ic"><use href="#scaleb"/></svg>缩尺配筋</button>
                        <button class="tool"><svg class="ic"><use href="#info"/></svg>钢筋信息</button>
                        <button class="tool"><svg class="ic"><use href="#lib"/></svg>钢筋图库</button>
                        <button class="tool"><svg class="ic"><use href="#other"/></svg>其他<i class="caret near"></i></button>
                        <button class="tool">关闭</button>
                        <i class="sep"></i>
                        <span class="total">单构件钢筋总重(kg)：15.94</span>
                    </div>
                    <div class="sheet">
                        <table>
                            <colgroup><col class="w33"><col class="w73"><col class="w56"><col class="w36"><col class="w33"><col class="w201"><col class="w166"><col class="w156"><col class="w61"><col class="w38"><col class="w39"><col class="w49"><col class="w61"><col class="w61"><col class="w73"></colgroup>
                            <thead>
                                <tr><th></th><th>筋号</th><th>直径(mm)</th><th>级别</th><th>图号</th><th>图形</th><th>计算公式</th><th>公式描述</th><th>长度(mm)</th><th>根数</th><th>搭接</th><th>损耗(%)</th><th>单重(kg)</th><th>总重(kg)</th><th>钢筋归类</th></tr>
                            </thead>
                            <tbody>
                                <tr class="current">
                                    <th>1*</th><td>横向钢筋.1</td><td>8</td>
                                    <td class="grade"><svg viewBox="0 0 11 11"><path d="M5.500 1v9M2 8.500h7M1.500 3.500h8v3h-8zM3.500 3v4M7.500 3v4"/></svg></td>
                                    <td>0</td>
                                    <td class="shape"><svg viewBox="0 0 200 43"><path d="M33 33V23H159V5"/><text x="81" y="43">857</text><text transform="translate(172 14) rotate(-90)">120</text><text transform="translate(46 28) rotate(-90)">70</text></svg></td>
                                    <td>928+15*d</td><td>净长+端头</td><td>1048</td><td>23</td><td>0</td><td>0</td><td>0.414</td><td>9.521</td><td>直筋</td>
                                </tr>
                                <tr class="saved">
                                    <th>2</th><td>水平纵筋.1</td><td>8</td>
                                    <td class="grade"><svg viewBox="0 0 11 11"><path d="M5.500 1v9M2 8.500h7M1.500 3.500h8v3h-8zM3.500 3v4M7.500 3v4"/></svg></td>
                                    <td>1</td>
                                    <td class="shape"><svg viewBox="0 0 200 28"><path d="M23 19h150"/><text x="89" y="16" class="red">3250</text></svg></td>
                                    <td>3250</td><td>净长</td><td>3250</td><td>5</td><td>0</td><td>0</td><td>1.284</td><td>6.419</td><td>直筋</td>
                                </tr>
                                <tr class="blank"><th>3</th><td></td><td></td><td></td><td></td><td></td><td></td><td></td><td></td><td></td><td></td><td></td><td></td><td></td><td></td></tr>
                            </tbody>
                        </table>
                        <div class="hscroll">
                            <svg viewBox="0 0 10 10"><path d="M7 1L3 5l4 4"/></svg>
                            <div class="track"><div class="thumb"></div></div>
                            <svg viewBox="0 0 10 10"><path d="M3 1l4 4-4 4"/></svg>
                        </div>
                    </div>
                </div>
            </section>
        </main>
    </div>

    <footer class="status">
        <span class="w148">X=67700 Y=5997</span><span class="w78">层高:2.8m</span><span class="w98">底标高:20.35m</span><span class="w48">1(1)</span><span class="fill"></span><span class="w70">346.7 FPS</span>
    </footer>

    <div class="taskbar">
        <button class="start" aria-label="开始"><svg viewBox="0 0 16 16"><path d="M0 2l7-1v7H0zM8 1l8-1v8H8zM0 9h7v6l-7-1zM8 9h8v7l-8-1z" fill="#fff"/></svg></button>
        <label class="search">
            <svg class="ring" viewBox="0 0 22 22"><circle cx="11" cy="11" r="9" fill="none" stroke="#fff" stroke-width="3"/></svg>
            <input type="text" placeholder="在这里输入你要搜索的内容" aria-label="搜索">
            <svg class="mic" viewBox="0 0 16 16"><rect x="5" y="0" width="5" height="10" rx="1" fill="none" stroke="#aaa"/><path d="M2.500 7v5h10V7M7.500 12v4M5 15.500h5" fill="none" stroke="#aaa"/></svg>
        </label>
        <div class="apps">
            <button aria-label="任务视图"><svg viewBox="0 0 24 24"><path d="M7.500 5.500h10v13h-10zM5 6.500H2.500v11H5M20 6.500h2.500v11H20" fill="none" stroke="#fff"/></svg></button>
            <button aria-label="风扇"><svg viewBox="0 0 24 24"><rect x="2" y="2" width="20" height="20" rx="8" fill="#e8e8e8"/><path d="M12 12q-5-4-1-10M12 12q4-5 10-1M12 12q5 4 1 10M12 12q-4 5-10 1M2 8q4-1 6 2M16 2q1 4-2 6M22 16q-4 1-6-2M8 22q-1-4 2-6" fill="none" stroke="#000a0d" stroke-width="1.500"/></svg></button>
            <button aria-label="浏览器" class="c-white"><svg><use href="#eglobe"/></svg></button>
            <button aria-label="G" class="c-white"><svg><use href="#swirl"/></svg></button>
            <button aria-label="Edge"><svg viewBox="0 0 24 24"><path d="M2 11Q4 2 12 2q9 1 10 11H9q1 5 6 5 3 0 6-2v4q-4 2-8 2-8-1-8-9 1-5 5-7-5 1-8 7zm7-2h7q-1-4-4-3-3 0-3 3z" fill="#0a7bdc"/></svg></button>
            <button aria-label="IE"><svg viewBox="0 0 24 24"><path d="M6 13h14q0-8-7-8t-8 8q1 8 8 8 5 0 7-5" fill="none" stroke="#45b0f0" stroke-width="4"/><path d="M2 22Q-1 17 8 8T22 3q1 1-1 4" fill="none" stroke="#f7c52f" stroke-width="2"/></svg></button>
            <button aria-label="资源管理器"><svg viewBox="0 0 24 24"><path d="M1 3h9l2 2h11v15H1z" fill="#f8dc84"/><path d="M1 3h9v2H1z" fill="#e6b53b"/><path d="M5 20v-7h14v7h-4v-3H9v3z" fill="#34aee5"/></svg></button>
            <button aria-label="广联达G" class="run"><svg viewBox="0 0 24 24"><path d="M24 2q-1 5-6 5-8-3-11 3-2 7 4 9 7 0 7-5-1-4-5-3 0-2 2-3 7 0 7 7-2 9-10 9-9-1-11-9Q0 8 7 4q5-3 10-1 4 1 7-1z" fill="#21a3f3"/></svg></button>
            <button aria-label="绿色浏览器" class="run"><svg viewBox="0 0 24 24"><circle cx="12" cy="12" r="10" fill="#5fbd2c" stroke="#d6f2c2" stroke-width="2"/><path d="M8 13h9q-1-6-5-6t-5 6q1 5 5 5 3 0 5-2" fill="none" stroke="#fff" stroke-width="3"/><path d="M2 22q0-5 8-12T22 2" fill="none" stroke="#86d84f" stroke-width="1.500"/></svg></button>
            <button aria-label="GGJ" class="run active"><svg><use href="#logo"/></svg></button>
            <button aria-label="资料" class="run"><svg viewBox="0 0 24 24"><rect width="24" height="24" rx="3" fill="#1680dc"/><path d="M3 7q4-1 9 2 5-3 9-2v12q-5-1-9 1-4-2-9-1z" fill="#fff"/><path d="M12 9v11M5 10h4M5 13h4" stroke="#b59b66"/><circle cx="14" cy="7" r="4" fill="#a8d6f7" stroke="#5690ca"/><path d="M17 10l4 5" stroke="#e2a34c" stroke-width="2"/></svg></button>
        </div>
        <span class="links">链接</span>
        <span class="cpu">28%<br>CPU使用</span>
        <div class="tray">
            <svg viewBox="0 0 16 16"><path d="M2 11l6-6 6 6"/></svg>
            <svg viewBox="0 0 16 16"><path d="M5 5h9v8H4V9M14 7h2v4h-2M1 2v3M4 2v3M0 5h5v2q-2 2-4 0zM2 8v3"/><path d="M6 7h6v4H6z" fill="#fff"/></svg>
            <svg viewBox="0 0 16 16"><path d="M2 14Q4 4 15 2M5 15q2-7 10-9M8 15q2-4 7-6M11 15l4-3" /></svg>
            <svg viewBox="0 0 16 16"><path d="M1 6h3l4-4v12l-4-4H1zM10 6q2 2 0 4M12 4q3 4 0 8M14 2q4 6 0 12"/></svg>
            <svg class="kbd" viewBox="0 0 24 16"><path d="M1 2h22v12H1z"/><path d="M4 5h16M4 8h16" stroke-dasharray="1 1"/><path d="M6 11h12"/></svg>
            <span>中</span>
            <svg class="s"><use href="#sogou"/></svg>
        </div>
        <span class="clock">21:59<br>2018/4/20</span>
        <div class="notice"><svg viewBox="0 0 24 24"><path d="M1 1h16v12h-4l-3 3v-3H1z" fill="#fff"/><path d="M3 4h12M3 7h12M3 10h8" stroke="#000"/><circle cx="16" cy="16" r="8" fill="#484848" stroke="#777"/></svg><b>2</b></div>
    </div>
</body>

</html>
```

FILE: styles.css
```css
* {
    box-sizing: border-box;
}

body {
    display: flex;
    flex-direction: column;
    height: 100vh;
    margin: 0;
    overflow: hidden;
    background-color: #f0f0f0;
    color: #000;
    font-family: "Open Sans", "Noto Sans CJK SC", sans-serif;
    font-size: 12px;
    line-height: 16px;
}

button, input, select {
    font: inherit;
    color: inherit;
}

button {
    padding: 0;
    border: none;
    background: none;
    white-space: nowrap;
}

svg {
    flex: none;
}

.sprite {
    position: absolute;
    width: 0;
    height: 0;
}

.ic {
    width: 16px;
    height: 16px;
}

/* title bar */
.titlebar {
    position: relative;
    display: flex;
    align-items: center;
    flex: none;
    height: 23px;
    padding-left: 2px;
    gap: 5px;
    background-color: #fff;
}

.titlebar h1 {
    flex: 1;
    margin: 0;
    overflow: hidden;
    font-family: "Noto Sans", "Noto Sans CJK SC", sans-serif;
    font-size: 12px;
    font-weight: normal;
    white-space: nowrap;
}

.win {
    display: flex;
}

.win button {
    width: 46px;
    height: 20px;
}

.win svg {
    width: 10px;
    height: 10px;
    fill: none;
    stroke: #000;
}

.ime {
    position: absolute;
    left: 716px;
    top: 3px;
    z-index: 2;
    display: flex;
    align-items: center;
    width: 192px;
    height: 24px;
    padding-left: 17px;
    gap: 6px;
    border: 1px solid #b4c7dd;
    background-color: #fff;
    color: #1f73c4;
    font-size: 16px;
}

.ime svg {
    width: 16px;
    height: 16px;
}

.ime .ime-logo {
    position: absolute;
    left: -16px;
    top: -4px;
    width: 28px;
    height: 28px;
}

.ball {
    position: absolute;
    right: 242px;
    top: -30px;
    z-index: 2;
    width: 48px;
    height: 48px;
    border: 2px solid #d5d9d5;
    border-radius: 50%;
    background-color: #3cc45f;
    box-shadow: 0 2px 6px rgba(0, 0, 0, 0.4);
    color: #fff;
    font-weight: bold;
    line-height: 70px;
    text-align: center;
}

/* menus and toolbars */
.menubar {
    display: flex;
    align-items: center;
    flex: none;
    height: 30px;
    margin-bottom: 1px;
    padding-left: 7px;
}

.menus {
    display: flex;
    gap: 11px;
    margin-right: 8px;
}

.news {
    flex: 1;
    height: 28px;
    margin-left: 4px;
    background-image: linear-gradient(#fbfbfb, #f0f0f0);
    color: #6b3300;
    line-height: 28px;
    text-align: center;
    text-decoration: none;
}

.account {
    display: flex;
    align-items: center;
    width: 240px;
    height: 28px;
    margin-left: 2px;
    padding-right: 4px;
    gap: 8px;
    background-image: linear-gradient(#fbfbfb, #f0f0f0);
}

.more {
    align-self: flex-start;
    margin-left: auto;
    font-size: 14px;
    font-weight: bold;
    line-height: 14px;
}

.mainbar {
    display: flex;
    flex: none;
    height: 30px;
    gap: 2px;
}

.bar {
    display: flex;
    align-items: center;
    height: 28px;
    padding: 0 4px 0 2px;
    border-radius: 2px;
    background-image: linear-gradient(#fcfcfc, #efefef);
}

.bar-file {
    width: 151px;
}

.bar-calc {
    width: 549px;
    padding-left: 0;
}

.bar-view {
    flex: 1;
    padding-left: 0;
}

.row {
    display: flex;
    align-items: flex-start;
    flex: none;
    height: 28px;
    gap: 2px;
}

.bar-axis {
    margin-left: 65px;
}

.bar-empty {
    width: 31px;
}

.tool {
    display: flex;
    align-items: center;
    flex: none;
    height: 23px;
    padding: 0 3px;
    gap: 4px;
    border: 1px solid transparent;
}

.tool:disabled, .unit, .row-snap label {
    color: #858585;
}

.tool.on {
    border-color: #0078d7;
    background-color: #dcebf7;
}

.tool.white {
    background-color: #fff;
}

.sigma {
    width: 12px;
    font-size: 14px;
    text-align: center;
}

.caret {
    margin: 0 0 0 1px;
    border: 3px solid transparent;
    border-top-color: currentColor;
    border-bottom: none;
}

.caret.near {
    margin-left: -2px;
}

.sep {
    flex: none;
    width: 1px;
    height: 15px;
    margin: 0 1px 0 2px;
    background-color: #b4b4b4;
}

.grip {
    flex: none;
    width: 3px;
    height: 16px;
    margin: 0 2px 0 1px;
    background-image: linear-gradient(#b8b8b8 50%, transparent 50%);
    background-size: 3px 5px;
}

select {
    width: 70px;
    height: 23px;
    margin-right: 2px;
    padding: 0 2px;
    border: none;
    background: linear-gradient(#000, #000) no-repeat right 5px top 11px / 5px 1px, linear-gradient(#000, #000) no-repeat right 6px top 12px / 3px 1px, linear-gradient(#000, #000) no-repeat right 7px top 13px / 1px 1px, linear-gradient(90deg, #fff 59px, #f6f6f6 59px);
    appearance: none;
}

select.short {
    width: 57px;
    background: linear-gradient(#000, #000) no-repeat right 5px top 11px / 5px 1px, linear-gradient(#000, #000) no-repeat right 6px top 12px / 3px 1px, linear-gradient(#000, #000) no-repeat right 7px top 13px / 1px 1px, linear-gradient(90deg, #fff 46px, #f6f6f6 46px);
}

/* left panel */
.workspace {
    display: flex;
    flex: 1;
    min-height: 0;
}

.navigator {
    display: flex;
    flex-direction: column;
    width: 226px;
    padding-bottom: 3px;
    font-family: "Noto Sans CJK SC", sans-serif;
}

.nav-title {
    display: flex;
    align-items: center;
    flex: none;
    height: 16px;
    margin-bottom: 1px;
    padding-right: 3px;
    gap: 6px;
    background-color: #0054e3;
    color: #fff;
    font-size: 13px;
}

.nav-title span {
    flex: 1;
}

.nav-title svg {
    width: 12px;
    height: 12px;
}

.section {
    flex: none;
    height: 22px;
    border: 1px solid #a0a0a0;
    box-shadow: inset 1px 1px #fff;
}

.section + .section {
    border-top: none;
}

.treebar {
    flex: none;
    height: 26px;
    margin: 1px 1px 0 2px;
    padding: 4px 5px;
    background-image: linear-gradient(#fdfdfd, #ebebeb);
}

.treebar svg {
    display: block;
    width: 46px;
    height: 20px;
}

.tree {
    flex: 1;
    margin: 0 1px 1px 2px;
    padding: 1px 0 0 7px;
    overflow: hidden;
    border: 1px solid #828790;
    background-color: #fff;
}

ul {
    margin: 0;
    padding: 0;
    list-style: none;
}

.tree li {
    display: flex;
    align-items: center;
    height: 16px;
    gap: 4px;
    white-space: nowrap;
}

.tree .chev {
    width: 10px;
    height: 10px;
    margin-right: 2px;
    fill: none;
    stroke: #999;
    stroke-width: 2;
}

.tree .branch {
    display: block;
    height: auto;
    margin-left: 5px;
    padding-left: 18px;
    border-left: 1px dotted #888;
}

.tree .branch li {
    border-left: 1px dotted #888;
    gap: 3px;
}

.tree .branch li::before {
    content: "";
    align-self: flex-start;
    width: 8px;
    height: 8px;
    border-bottom: 1px dotted #888;
}

.tree .branch li:last-child {
    border-left-color: transparent;
}

.picked {
    display: flex;
    gap: 3px;
    background-color: #d9d9d9;
}

.new {
    align-self: flex-start;
    padding: 0 1px;
    background-color: #ffd800;
    font-size: 9px;
    line-height: 9px;
}

/* drawing area */
.content {
    display: flex;
    flex: 1;
    flex-direction: column;
    min-width: 0;
    padding: 0 2px 0 5px;
}

.view {
    position: relative;
    flex: 1;
    min-height: 0;
    background-color: #000;
}

.scene {
    display: block;
    width: 100%;
    height: 100%;
}

.axis {
    fill: #ccc;
    font-family: "Liberation Sans", sans-serif;
    font-size: 15px;
    text-anchor: middle;
}

.axis.z {
    fill: #0a7cff;
    font-size: 14px;
}

.axis.x {
    fill: #f00;
    font-size: 12px;
}

.panel {
    position: absolute;
    left: 10px;
    top: 3px;
    display: flex;
    flex-direction: column;
    width: 166px;
    height: 177px;
    padding: 0 1px 1px;
    border: 1px solid #555;
    background-color: #fff;
    font-family: "Noto Sans CJK SC", sans-serif;
}

.panel h2 {
    margin: 0;
    padding-left: 6px;
    color: #999;
    font-size: 12px;
    font-weight: normal;
    line-height: 30px;
}

.checks {
    flex: 1;
    padding: 1px 3px;
    border: 1px solid #828790;
}

.checks label {
    display: flex;
    align-items: center;
    height: 12px;
    gap: 4px;
    line-height: 12px;
}

input[type="checkbox"] {
    width: 11px;
    height: 11px;
    margin: 0;
    border: 1px solid #8a8a8a;
    background-color: #fff;
    appearance: none;
}

input[type="checkbox"]:checked::after {
    content: "";
    display: block;
    width: 7px;
    height: 4px;
    margin: 1px;
    border-left: 1px solid #333;
    border-bottom: 1px solid #333;
    transform: rotate(-45deg);
}

.row-snap {
    height: 32px;
    padding-top: 1px;
    gap: 0;
}

.row-snap .bar {
    padding: 0 1px;
}

.row-snap .turn {
    display: flex;
    align-items: center;
    padding: 0 4px 0 0;
    gap: 8px;
    color: #000;
}

.row-snap label {
    padding: 0 2px;
}

.unit {
    padding: 0 2px;
}

.spin {
    display: flex;
    align-items: center;
    width: 58px;
    height: 23px;
    padding-right: 3px;
    border: 1px solid #7a7a7a;
}

.spin.wide {
    width: 68px;
}

.spin input {
    width: 100%;
    min-width: 0;
    padding: 0 10px 0 0;
    border: none;
    background: none;
    color: #858585;
    text-align: right;
}

.spin i {
    flex: none;
    width: 6px;
    height: 16px;
    background: linear-gradient(#555, #555) no-repeat center 3px / 5px 1px, linear-gradient(#555, #555) no-repeat center 2px / 3px 1px, linear-gradient(#555, #555) no-repeat center 13px / 5px 1px, linear-gradient(#555, #555) no-repeat center 14px / 3px 1px;
}

/* rebar table */
.dock {
    display: flex;
    flex: none;
    height: 203px;
    padding-bottom: 3px;
}

.splitter {
    width: 13px;
    padding-top: 2px;
    background: radial-gradient(#bbb 1px, transparent 1px) 1px 16px / 5px 5px;
}

.splitter svg {
    display: block;
    width: 11px;
    height: 11px;
    background-color: #f0f0f0;
}

.editor {
    display: flex;
    flex: 1;
    flex-direction: column;
    min-width: 0;
}

.editor .bar {
    height: 29px;
    padding: 0;
}

.total {
    padding-left: 4px;
}

.sheet {
    display: flex;
    flex: 1;
    flex-direction: column;
    overflow: hidden;
    border: 1px solid #a6a6ab;
    background-color: #fff;
    font-family: "Noto Sans CJK SC", sans-serif;
}

table {
    width: 1136px;
    table-layout: fixed;
    border-collapse: separate;
    border-spacing: 0;
}

th, td {
    height: 19px;
    padding: 0 1px;
    overflow: hidden;
    border-right: 1px solid #c0c0c0;
    border-bottom: 1px solid #c0c0c0;
    font-weight: normal;
    line-height: 18px;
    text-align: left;
    white-space: nowrap;
}

thead th {
    background-image: linear-gradient(#f9d79f, #f1be62);
    color: #5c0a5c;
    text-align: center;
}

th:first-child {
    background-image: linear-gradient(90deg, #fff, #efefef);
    text-align: center;
}

td:nth-child(2) {
    border-right-color: #000;
}

.current td {
    height: 44px;
    background-color: #8fd7d9;
}

.current td:nth-child(2) {
    background-color: #aeebd9;
}

.current th:first-child {
    background: #ffd28a;
    color: #5c0a5c;
}

.saved td {
    height: 29px;
    background-color: #ccffda;
}

.grade svg {
    display: block;
    width: 11px;
    height: 11px;
    margin: 0 auto;
    fill: none;
    stroke: #000;
}

td.shape {
    padding: 0;
    overflow: visible;
}

.shape svg {
    display: block;
    width: 200px;
    overflow: visible;
}

.shape path {
    fill: none;
    stroke: #000;
    stroke-width: 2;
}

.shape text {
    font-size: 11px;
}

.shape .red {
    fill: #f00;
}

.w33 { width: 33px; }
.w36 { width: 36px; }
.w38 { width: 38px; }
.w39 { width: 39px; }
.w49 { width: 49px; }
.w56 { width: 56px; }
.w61 { width: 61px; }
.w73 { width: 73px; }
.w156 { width: 156px; }
.w166 { width: 166px; }
.w201 { width: 201px; }

.hscroll {
    display: flex;
    align-items: center;
    height: 16px;
    margin-top: auto;
    margin-bottom: 1px;
    background-color: #f0f0f0;
}

.hscroll svg {
    width: 10px;
    height: 10px;
    margin: 0 3px;
    fill: none;
    stroke: #444;
    stroke-width: 2;
}

.track {
    flex: 1;
    height: 100%;
}

.thumb {
    width: 66%;
    height: 100%;
    background-color: #cdcdcd;
}

/* status bar */
.status {
    display: flex;
    flex: none;
    height: 20px;
    gap: 2px;
    font-family: "Noto Sans CJK SC", sans-serif;
}

.status span {
    padding-left: 1px;
    border: 1px solid #d5d5d5;
    background-image: linear-gradient(#fdfdfd, #f0f0f0);
    line-height: 18px;
}

.w148 { width: 148px; }
.w78 { width: 78px; }
.w98 { width: 98px; }
.w48 { width: 48px; }
.w70 { width: 70px; }

.fill {
    flex: 1;
}

/* taskbar */
.taskbar {
    display: flex;
    align-items: center;
    flex: none;
    height: 40px;
    background-color: #000a0d;
    color: #fff;
}

.start {
    width: 48px;
    height: 40px;
    background-color: #000;
}

.start svg {
    width: 16px;
    height: 16px;
}

.search {
    display: flex;
    align-items: center;
    width: 344px;
    height: 40px;
    padding: 0 12px 0 9px;
    gap: 4px;
    background-color: #333;
}

.ring {
    width: 22px;
    height: 22px;
}

.mic {
    width: 16px;
    height: 16px;
}

.search input {
    flex: 1;
    min-width: 0;
    padding: 0;
    border: none;
    background: none;
    font-size: 14px;
}

.search input::placeholder {
    color: #999;
}

.apps {
    display: flex;
    gap: 3px;
}

.apps button {
    width: 47px;
    height: 40px;
    padding-top: 2px;
    border-bottom: 2px solid transparent;
}

.apps svg {
    display: block;
    width: 24px;
    height: 24px;
    margin: 0 auto;
}

.apps .run {
    border-bottom-color: #76b9ed;
}

.apps .active {
    background-color: #323d42;
}

.c-white {
    color: #e8e8e8;
}

.links {
    margin-left: 10px;
}

.cpu, .clock {
    line-height: 18px;
    text-align: center;
}

.cpu {
    margin-left: 19px;
}

.tray {
    display: flex;
    align-items: center;
    margin-left: 18px;
    gap: 8px;
}

.tray svg {
    width: 16px;
    height: 16px;
    fill: none;
    stroke: #fff;
}

.tray .kbd {
    width: 24px;
}

.tray .s {
    margin-left: 4px;
    stroke: none;
}

.clock {
    margin-left: 20px;
}

.notice {
    position: relative;
    width: 24px;
    height: 24px;
    margin-left: auto;
    margin-right: 18px;
}

.notice svg {
    width: 24px;
    height: 24px;
}

.notice b {
    position: absolute;
    left: 12px;
    top: 8px;
}
```
